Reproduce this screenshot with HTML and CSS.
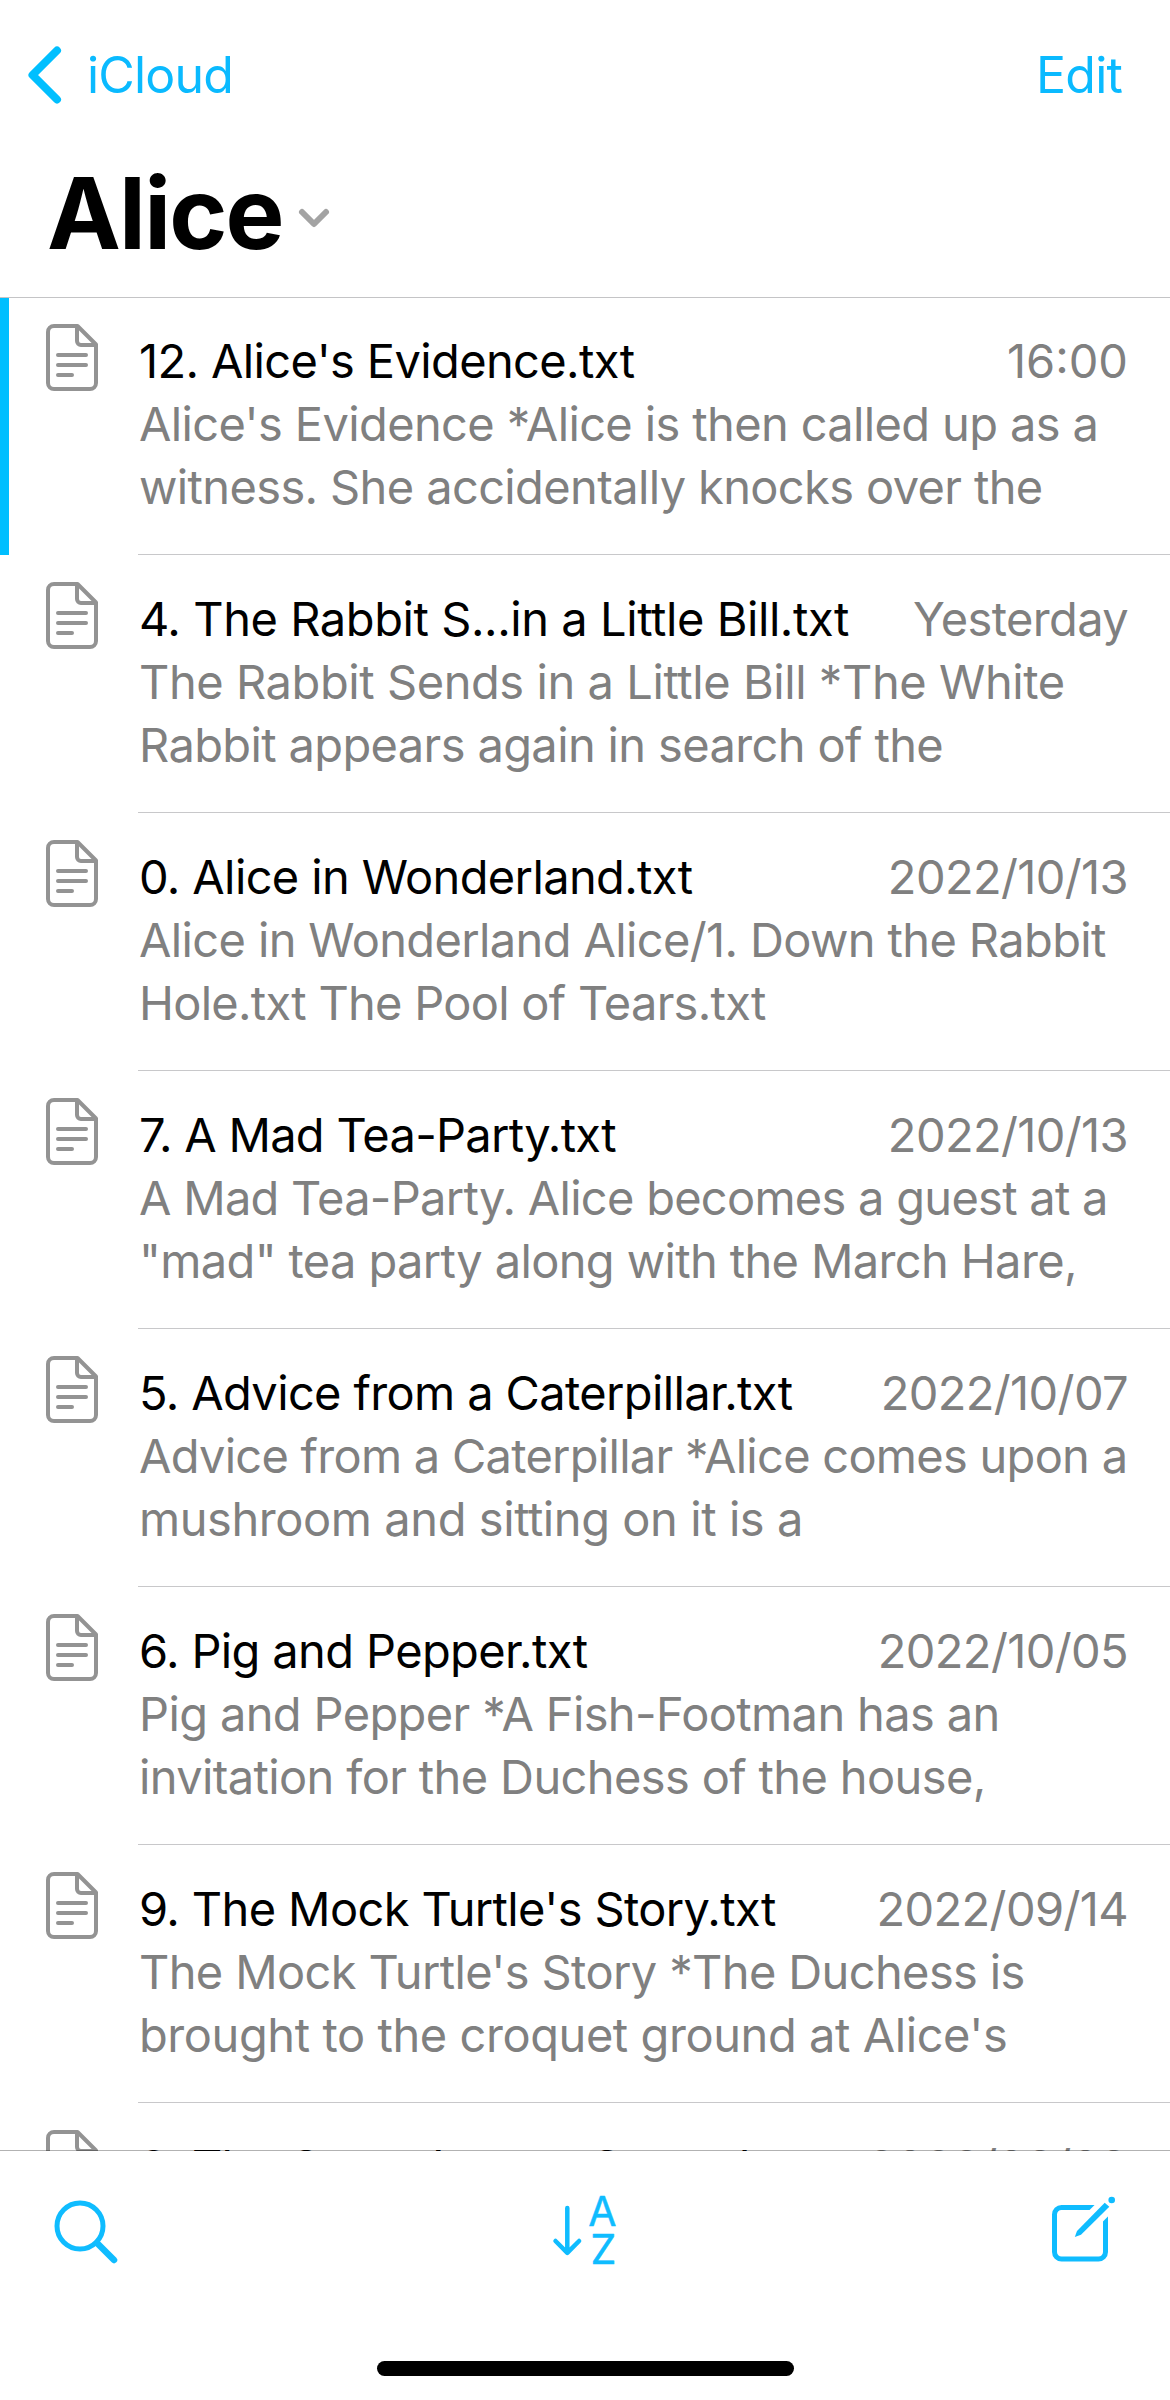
FILE: index.html
```html
<!DOCTYPE html>
<html lang="en">
<head>
	<meta charset="UTF-8">
	<title>Alice</title>
	<link rel="stylesheet" href="styles.css">
</head>
<body>
	<svg class="defs" width="0" height="0">
		<symbol id="doc" viewBox="0 0 52 67">
			<path d="M8 2h23.500l18.500 18.500v38.500a6 6 0 0 1-6 6h-36a6 6 0 0 1-6-6v-51a6 6 0 0 1 6-6z M31 3v14a4 4 0 0 0 4 4h14 M12 31h28 M12 41h28 M12 51h14"/>
		</symbol>
	</svg>
	<div id="main">
		<div class="header">
			<div class="nav">
				<a class="back">
					<svg width="34" height="58" viewBox="0 0 34 58"><path d="M29 4.500 4.500 29 29 53.500"/></svg>
					<span>iCloud</span>
				</a>
				<a class="edit">Edit</a>
			</div>
			<div class="title">
				<h1>Alice</h1>
				<svg width="32" height="20" viewBox="0 0 32 20"><path d="M4 4l12 12 12-12"/></svg>
			</div>
		</div>
		<ul class="list">
			<li class="active">
				<svg class="doc"><use href="#doc"/></svg>
				<div class="info">
					<p class="name"><span>12. Alice's Evidence.txt</span><em class="time">16:00</em></p>
					<p class="text">Alice's Evidence *Alice is then called up as a<br>witness. She accidentally knocks over the</p>
				</div>
			</li>
			<li>
				<svg class="doc"><use href="#doc"/></svg>
				<div class="info">
					<p class="name"><span class="wide">4. The Rabbit S...in a Little Bill.txt</span><em>Yesterday</em></p>
					<p class="text"><span class="wide">The Rabbit Sends in a Little Bill *The White</span><br>Rabbit appears again in search of the</p>
				</div>
			</li>
			<li>
				<svg class="doc"><use href="#doc"/></svg>
				<div class="info">
					<p class="name"><span>0. Alice in Wonderland.txt</span><em>2022/10/13</em></p>
					<p class="text">Alice in Wonderland Alice/1. Down the Rabbit<br><span class="tight">Hole.txt The Pool of Tears.txt</span></p>
				</div>
			</li>
			<li>
				<svg class="doc"><use href="#doc"/></svg>
				<div class="info">
					<p class="name"><span class="tight">7. A Mad Tea-Party.txt</span><em>2022/10/13</em></p>
					<p class="text"><span class="tight">A Mad Tea-Party. Alice becomes a guest at a</span><br>"mad" tea party along with the March Hare,</p>
				</div>
			</li>
			<li>
				<svg class="doc"><use href="#doc"/></svg>
				<div class="info">
					<p class="name"><span>5. Advice from a Caterpillar.txt</span><em>2022/10/07</em></p>
					<p class="text"><span class="tight">Advice from a Caterpillar *Alice comes upon a</span><br><span class="wide">mushroom and sitting on it is a</span></p>
				</div>
			</li>
			<li>
				<svg class="doc"><use href="#doc"/></svg>
				<div class="info">
					<p class="name"><span>6. Pig and Pepper.txt</span><em>2022/10/05</em></p>
					<p class="text">Pig and Pepper *A Fish-Footman has an<br>invitation for the Duchess of the house,</p>
				</div>
			</li>
			<li>
				<svg class="doc"><use href="#doc"/></svg>
				<div class="info">
					<p class="name"><span>9. The Mock Turtle's Story.txt</span><em>2022/09/14</em></p>
					<p class="text">The Mock Turtle's Story *The Duchess is<br><span class="wide">brought to the croquet ground at Alice's</span></p>
				</div>
			</li>
			<li>
				<svg class="doc"><use href="#doc"/></svg>
				<div class="info">
					<p class="name"><span>8. The Queen'...quet Ground.txt</span><em>2022/09/09</em></p>
				</div>
			</li>
		</ul>
		<div class="toolbar">
			<div class="tools">
				<svg width="66" height="72" viewBox="0 0 66 72">
					<circle cx="28" cy="34" r="23" stroke-width="5"/>
					<path d="M45 51l17 17" stroke-width="6.500"/>
				</svg>
				<svg width="66" height="72" viewBox="0 0 66 72">
					<path d="M16.300 16v44 M4.500 49l11.800 11.800 11.800-11.800" stroke-width="4.500"/>
					<text x="51.500" y="33.500">A</text>
					<text x="52.500" y="72">Z</text>
				</svg>
				<svg width="66" height="72" viewBox="0 0 66 72">
					<rect x="4.500" y="15.500" width="51" height="51.500" rx="7" stroke-width="5"/>
					<path class="gap" d="M28 42 64 6"/>
					<path class="pen" d="M24.800 45l2.200-6 27.700-28.300 4.600 4-28.300 28z"/>
					<circle class="pen" cx="61.700" cy="8" r="3.300"/>
				</svg>
			</div>
			<div class="home"></div>
		</div>
	</div>
</body>
</html>
```

FILE: styles.css
```css
		h1,p,ul,li {
			padding: 0;
			margin: 0;
		}

		body {
			margin: 0;
			background: #fff;
			font-family: Inter, "Liberation Sans", sans-serif;
		}

		ul {
			list-style: none;
		}

		em {
			font-style: normal;
		}

		svg {
			display: block;
			flex: none;
			overflow: visible;
			fill: none;
			stroke-linecap: round;
			stroke-linejoin: round;
		}

		.defs {
			position: absolute;
		}

		#main {
			display: flex;
			flex-direction: column;
			width: 1170px;
			height: 2400px;
			overflow: hidden;
		}

		.header {
			position: relative;
			z-index: 1;
			box-sizing: border-box;
			height: 298px;
			padding-top: 45px;
			border-bottom: 1px solid #c4c4c6;
		}

		.nav {
			display: flex;
			justify-content: space-between;
			height: 60px;
			padding: 0 48px 0 28px;
			font-size: 50px;
			line-height: 60px;
			letter-spacing: -.8px;
			color: #0abaff;
		}

		.back {
			display: flex;
			align-items: center;
			gap: 25px;
		}

		.back svg {
			stroke: #00bfff;
			stroke-width: 8;
		}

		.title {
			display: flex;
			align-items: center;
			gap: 15px;
			margin-top: 48px;
			padding-left: 47px;
		}

		h1 {
			font-size: 99px;
			line-height: 120px;
			font-weight: 700;
			letter-spacing: -1.8px;
		}

		.title svg {
			margin-top: 10px;
			stroke: #a3a3a3;
			stroke-width: 6;
		}

		.list {
			flex: 1;
			min-height: 0;
			margin-top: -1px;
			overflow: hidden;
		}

		.list li {
			display: flex;
			height: 258px;
			padding-left: 46px;
		}

		.list .active {
			box-shadow: inset 9px 0 #00bfff;
		}

		.doc {
			width: 52px;
			height: 67px;
			margin-top: 27px;
			stroke: #939393;
			stroke-width: 4;
		}

		.info {
			flex: 1;
			box-sizing: border-box;
			margin-left: 40px;
			padding: 32px 42px 0 1px;
			border-bottom: 1px solid #c8c8ca;
			font-size: 47px;
			line-height: 63px;
			letter-spacing: -.63px;
			color: #808080;
			white-space: nowrap;
		}

		.wide {
			letter-spacing: -.43px;
		}

		.tight {
			letter-spacing: -.73px;
		}

		.name {
			display: flex;
			justify-content: space-between;
		}

		.name span {
			color: #000;
		}

		.name .time {
			letter-spacing: 0;
		}

		/* the line is see-through, the list runs under it */
		.toolbar {
			position: relative;
			box-sizing: border-box;
			height: 250px;
			margin-top: -1px;
			padding-top: 41px;
			border-top: 1px solid rgba(0, 0, 0, .3);
			background: #fff;
			background-clip: padding-box;
			top: 0;
		}

		.tools {
			display: flex;
			justify-content: space-between;
			padding: 0 54px 0 52px;
			stroke: #0fbcff;
		}

		.tools text {
			font-size: 41px;
			text-anchor: middle;
			fill: #0fbcff;
			stroke-width: .5;
		}

		.tools .gap {
			stroke: #fff;
			stroke-width: 17.5;
			stroke-linecap: butt;
		}

		.tools .pen {
			fill: #0fbcff;
			stroke: none;
		}

		.home {
			width: 417px;
			height: 15px;
			margin: 97px auto 0;
			border-radius: 8px;
			background: #000;
		}
```
